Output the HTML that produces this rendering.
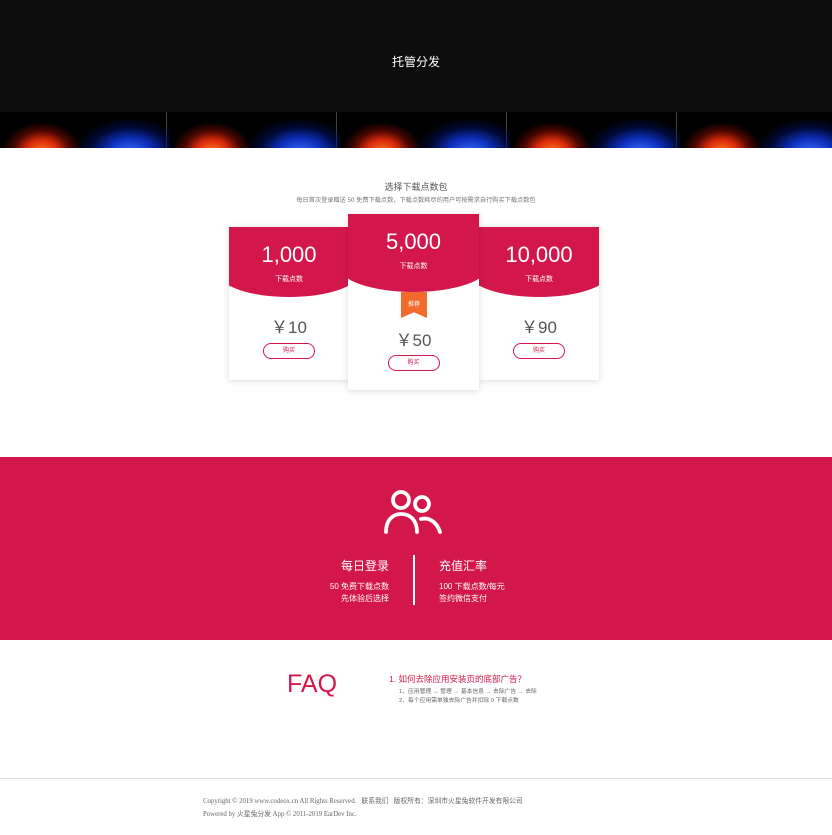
<!DOCTYPE html>
<html><head><meta charset="utf-8"><style>
*{margin:0;padding:0;box-sizing:border-box}
body{width:832px;height:835px;background:#fff;font-family:"Liberation Sans","Noto Sans CJK SC",sans-serif;position:relative;overflow:hidden}
.top{position:absolute;left:0;top:0;width:832px;height:112px;background:#0d0d0d;color:#fff;font-size:12px;text-align:center;line-height:124px}
.strip{position:absolute;left:0;top:112px;width:832px;height:36px;background:#000;
background-image:
radial-gradient(ellipse 40px 30px at 42px 40px,#ff7a22 0%,#d82a0a 40%,rgba(110,10,0,0.7) 70%,transparent 100%),
radial-gradient(ellipse 55px 34px at 130px 40px,#3a6cff 0%,#0c2fb8 40%,rgba(0,15,90,0.6) 72%,transparent 100%),
linear-gradient(90deg,transparent 166px,#444 166px,#444 167px,transparent 167px);
background-size:170px 36px;background-repeat:repeat-x}
.h{position:absolute;width:832px;text-align:center}
.card{position:absolute;background:#fff;box-shadow:0 1px 6px rgba(0,0,0,.15);text-align:center;overflow:hidden}
.card .hd{position:absolute;left:-10px;right:-10px;top:0;background:#d3174a;border-radius:0 0 50% 50%/0 0 34% 34%;color:#fff}
.num{font-size:22px;color:#fff}
.sub{font-size:7px;color:#fff}
.price{position:absolute;width:100%;font-size:17px;color:#555}
.btn{position:absolute;left:50%;width:52px;height:16px;margin-left:-26px;border:1px solid #d3174a;border-radius:9px;font-size:6px;color:#d3174a;line-height:14px}
.red{position:absolute;left:0;top:457px;width:832px;height:183px;background:#d3174a;color:#fff}
</style></head><body>
<div class="top">托管分发</div>
<div class="strip"></div>
<div class="h" style="top:180px;font-size:9px;color:#555">选择下载点数包</div>
<div class="h" style="top:195px;font-size:6.2px;color:#777">每日首次登录赠送 50 免费下载点数，下载点数耗尽的用户可按需求自行购买下载点数包</div>

<div class="card" style="left:229px;top:227px;width:120px;height:153px">
<div class="hd" style="height:70px"><div class="num" style="margin-top:15px">1,000</div><div class="sub" style="margin-top:6px">下载点数</div></div>
<div class="price" style="top:86px">￥10</div>
<div class="btn" style="top:116px">购买</div>
</div>
<div class="card" style="left:479px;top:227px;width:120px;height:153px">
<div class="hd" style="height:70px"><div class="num" style="margin-top:15px">10,000</div><div class="sub" style="margin-top:6px">下载点数</div></div>
<div class="price" style="top:86px">￥90</div>
<div class="btn" style="top:116px">购买</div>
</div>
<div class="card" style="left:348px;top:214px;width:131px;height:176px;z-index:2">
<div class="hd" style="height:78px"><div class="num" style="margin-top:15px">5,000</div><div class="sub" style="margin-top:6px">下载点数</div></div>
<div style="position:absolute;left:53px;top:78px;width:26px;height:26px;background:#f26b2a;clip-path:polygon(0 0,100% 0,100% 100%,50% 78%,0 100%);color:#fff;font-size:6px;padding-top:7px">推荐</div>
<div class="price" style="top:112px">￥50</div>
<div class="btn" style="top:141px">购买</div>
</div>

<div class="red">
<svg style="position:absolute;left:384px;top:31px" width="60" height="46" viewBox="0 0 60 46" fill="none" stroke="#fff" stroke-width="3.8" stroke-linecap="round">
<circle cx="17" cy="12" r="8"/><circle cx="38" cy="16" r="7"/>
<path d="M2 44 C2 33 8 26 17 26 C27 26 33 33 33 44"/>
<path d="M37 31 C45 29 53 34 56 44"/>
</svg>
<div style="position:absolute;left:413px;top:98px;width:2px;height:50px;background:#fff"></div>
<div style="position:absolute;right:443px;top:100px;text-align:right;font-size:12px">每日登录</div>
<div style="position:absolute;right:443px;top:124px;text-align:right;font-size:8px;line-height:12px">50 免费下载点数<br>先体验后选择</div>
<div style="position:absolute;left:439px;top:100px;font-size:12px">充值汇率</div>
<div style="position:absolute;left:439px;top:124px;font-size:8px;line-height:12px">100 下载点数/每元<br>签约微信支付</div>
</div>

<div style="position:absolute;left:287px;top:670px;font-size:25px;color:#d3174a">FAQ</div>
<div style="position:absolute;left:389px;top:673px;font-size:8.5px;color:#d3174a">1. 如何去除应用安装页的底部广告？</div>
<div style="position:absolute;left:399px;top:688px;font-size:5.8px;color:#666;line-height:9px">1、应用管理 → 管理 → 基本信息 → 去除广告 → 去除<br>2、每个应用需单独去除广告并扣除 0 下载点数</div>
<div style="position:absolute;left:0;top:778px;width:832px;height:1px;background:#ddd"></div>
<div style="position:absolute;left:203px;top:795px;font-size:6.8px;color:#666;line-height:13px;font-family:'Liberation Serif','Noto Sans CJK SC',serif">Copyright © 2019 www.codeox.cn All Rights Reserved. &nbsp; 联系我们 &nbsp; 版权所有：深圳市火星兔软件开发有限公司<br>Powered by 火星兔分发 App © 2011-2019 EarDev Inc.</div>
</body></html>
